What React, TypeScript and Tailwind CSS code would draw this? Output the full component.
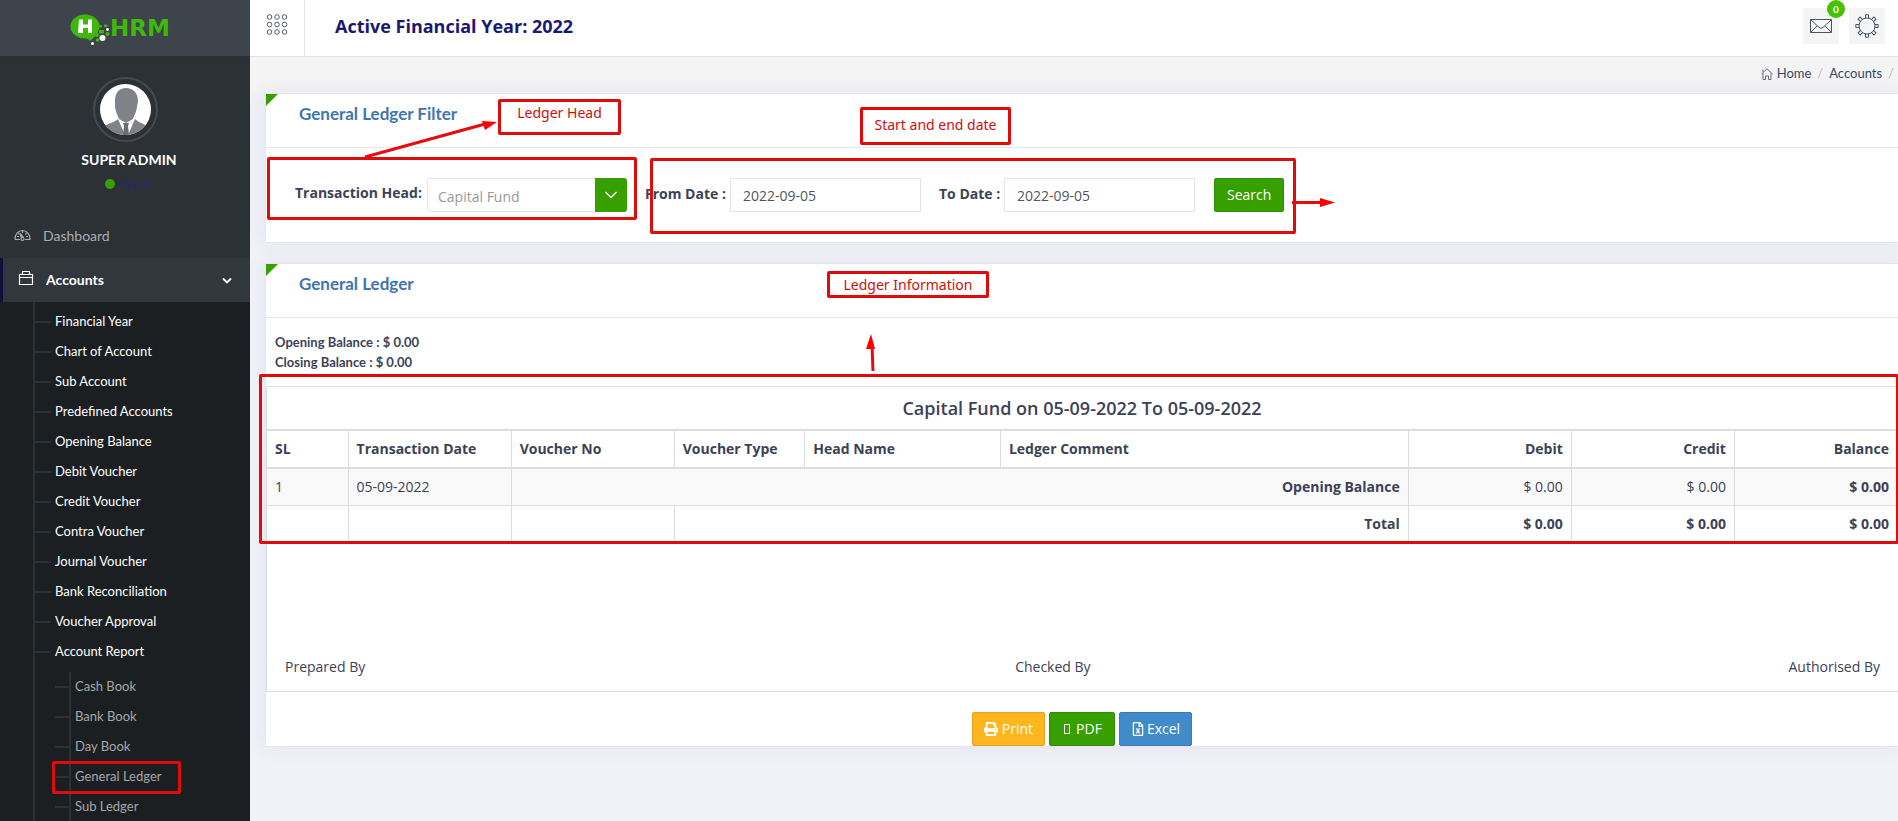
import React from "react";
import { FaPrint, FaRegFileExcel } from "react-icons/fa";

const accountLinks = [
  "Financial Year",
  "Chart of Account",
  "Sub Account",
  "Predefined Accounts",
  "Opening Balance",
  "Debit Voucher",
  "Credit Voucher",
  "Contra Voucher",
  "Journal Voucher",
  "Bank Reconciliation",
  "Voucher Approval",
  "Account Report",
];

const reportLinks = ["Cash Book", "Bank Book", "Day Book", "General Ledger", "Sub Ledger"];

function Logo() {
  return (
    <svg width="102" height="34" viewBox="0 0 102 34" role="img" aria-label="HRM">
      <ellipse cx="15" cy="13.500" rx="14.500" ry="12" fill="#3fb80b" />
      <path d="M11 24c5 1 8 2 9 4 3-3 7-5 8-10z" fill="#3fb80b" />
      <path d="M9 6.500h4v5h5v-5h4v13.500h-4v-5h-5v5H8z" fill="#fff" />
      <g fill="#3fb80b">
        <rect x="29" y="12" width="3" height="2.500" rx="1" />
        <rect x="34" y="11.500" width="3.500" height="2.500" rx="1" />
        <rect x="29" y="17" width="5" height="3.500" rx="1" />
        <circle cx="37.500" cy="21" r="2" />
        <circle cx="27.500" cy="27" r="1.800" />
        <circle cx="27" cy="22" r="2" />
      </g>
      <circle cx="32.500" cy="25" r="3" fill="#fff" />
      <circle cx="37.500" cy="16.500" r="1.400" fill="#fff" />
      <circle cx="22.500" cy="30.500" r="1.500" fill="#fff" />
      <text x="40" y="23" fill="#3fb80b" fontSize="23" fontWeight="700" fontFamily="DejaVu Sans, sans-serif">
        HRM
      </text>
    </svg>
  );
}

function Avatar() {
  return (
    <div className="flex size-[65px] items-center justify-center rounded-full border-2 border-[#444a50]">
      <svg width="51" height="51" viewBox="0 0 51 51" className="shrink-0" aria-hidden="true">
        <defs>
          <clipPath id="face">
            <circle cx="25.500" cy="25.500" r="25.500" />
          </clipPath>
        </defs>
        <g clipPath="url(#face)">
          <rect width="51" height="51" fill="#fff" />
          <path d="M15 17C15 9 19 4 26 4s12 5 12 13c0 2-1 4-1 6-1 6-3 9-4 12l-7 4-7-4c-1-3-3-6-4-12 0-2 0-4 0-6z" fill="#808287" />
          <path d="M0 44c6-4 14-5 18-9l7 16H0zM51 44c-6-4-12-5-16-9l-7 16h23z" fill="#808287" />
          <path d="M23 39h6l-1 3 1 9h-6l1-9z" fill="#6a6c71" />
        </g>
      </svg>
    </div>
  );
}

function Sidebar() {
  return (
    <aside className="flex w-[250px] shrink-0 flex-col bg-[#2c3136] font-[Lato,sans-serif]">
      <a href="#home" className="flex h-[57px] shrink-0 items-center justify-center border-b border-[#2a2e33] bg-[#3e444b] pt-1 pr-2">
        <Logo />
      </a>
      <div className="flex shrink-0 flex-col items-center pt-5">
        <Avatar />
        <p className="mt-2 pl-2 text-sm leading-5 font-bold text-white">SUPER ADMIN</p>
        <p className="mt-1 flex h-5 items-center gap-1 pl-2 text-xs text-[#232a6d]">
          <span className="size-2.5 rounded-full bg-[#37a000]" />
          Admin
        </p>
      </div>
      <nav className="mt-4 flex grow flex-col">
        <a href="#dashboard" className="flex h-12 shrink-0 items-center gap-3 pt-1 pl-3.5 text-sm text-[#a9adb0]">
          <svg width="17" height="14" viewBox="0 0 17 14" fill="none" stroke="currentColor" strokeWidth="1.200" aria-hidden="true">
            <path d="M1 10.500C1 5 4.500 1.500 8.500 1.500s7.500 3.500 7.500 9h-5M1 10.500h5M3 7.500h2M12 7.500h2M4.500 4l1 1.500M12.500 4l-1 1.500M8.500 2v2M7.500 9L6 4.500l3.500 4" />
            <circle cx="8.500" cy="10" r="1.500" />
          </svg>
          Dashboard
        </a>
        <a href="#accounts" className="flex h-11 shrink-0 items-center gap-3 border-l-3 border-[#100f3c] bg-[#32373d] pr-4 pl-[15px] text-sm font-bold text-white">
          <svg width="16" height="16" viewBox="0 0 16 16" fill="none" stroke="currentColor" className="-mt-1" aria-hidden="true">
            <path d="M1.500 4.500h13v10h-13zM1.500 7.500h13M4.500 4V1.500h7V4" strokeWidth="1.200" />
          </svg>
          <span className="grow">Accounts</span>
          <svg width="14" height="14" viewBox="0 0 14 14" fill="none" stroke="currentColor" strokeWidth="1.800" aria-hidden="true">
            <path d="M3 5.500l4 4 4-4" />
          </svg>
        </a>
        <div className="grow bg-[#1c1f22] pl-[33px]">
          <ul className="border-l-2 border-[#2c3136] pt-[5px]">
            {accountLinks.map((label) => (
              <li key={label}>
                <a href="#account" className="flex h-[30px] items-center gap-1 text-[13px] text-white">
                  <span className="h-0.5 w-4 bg-[#2c3136]" />
                  {label}
                </a>
              </li>
            ))}
            <li className="mt-[5px] pl-5">
              <ul>
                {reportLinks.map((label) => (
                  <li key={label}>
                    <a href="#report" className="flex h-[30px] items-center text-[13px] text-[#a4a7a9]">
                      <span className="h-0.5 w-3.5 bg-[#2c3136]" />
                      <span className="mr-1 h-full w-0.5 bg-[#2c3136]" />
                      {label}
                    </a>
                  </li>
                ))}
              </ul>
            </li>
          </ul>
        </div>
      </nav>
    </aside>
  );
}

const gearTeeth = [0, 45, 90, 135, 180, 225, 270, 315];

function TopBar() {
  return (
    <header className="flex h-[57px] items-center border-b border-[#e1e4ea] bg-white">
      <button type="button" aria-label="Toggle menu" className="flex h-full w-[55px] items-start justify-center border-r border-[#dfe3ec] pt-[14px]">
        <svg width="22" height="22" viewBox="0 0 22 22" fill="none" stroke="#555b66" aria-hidden="true">
          {[3, 10.5, 18].map((y) => [3.5, 11, 18.5].map((x) => <circle key={`${x}-${y}`} cx={x} cy={y} r="2.300" />))}
        </svg>
      </button>
      <h1 className="ml-[30px] grow pb-1 text-lg font-bold text-[#191970]">Active Financial Year: 2022</h1>
      <div className="mr-[13px] flex gap-2.5 pb-1">
        <button type="button" aria-label="Messages" className="relative flex size-9 items-center justify-center bg-[#f5f5f5]">
          <svg width="22" height="16" viewBox="0 0 22 16" fill="none" stroke="#4a5468" aria-hidden="true">
            <path d="M.5 1.500h21v13H.5zM.5 1.500L8 8.500l3 2 3-2 7.500-7M.5 14.500L7 8M21.500 14.500L15 8" />
          </svg>
          <span className="absolute -top-2 -right-1.5 flex size-[18px] items-center justify-center rounded-full bg-[#45c203] font-[Lato,sans-serif] text-[10px] font-bold text-white">
            0
          </span>
        </button>
        <button type="button" aria-label="Settings" className="flex size-9 items-center justify-center bg-[#f5f5f5]">
          <svg width="24" height="24" viewBox="0 0 24 24" fill="none" stroke="#4a5468" aria-hidden="true">
            <circle cx="12" cy="12" r="8" />
            {gearTeeth.map((angle) => (
              <path key={angle} d="M10.500 4V.8h3V4" transform={`rotate(${angle} 12 12)`} />
            ))}
          </svg>
        </button>
      </div>
    </header>
  );
}

function PanelHeading({ title }: { title: string }) {
  return (
    <div className="flex h-[54px] items-start border-b border-[#e4e8ee] pr-4">
      <svg width="12" height="12" viewBox="0 0 12 12" aria-hidden="true">
        <path d="M0 0h12L0 12z" fill="#37a000" />
      </svg>
      <h2 className="ml-[21px] pt-2 font-[Lato,sans-serif] text-[17px] leading-6 font-bold text-[#3f76ad]">{title}</h2>
    </div>
  );
}

function FilterPanel() {
  const field = "h-[34px] w-[191px] border border-[#e4e5e7] bg-white px-3 text-sm text-[#51555e]";
  return (
    <section className="h-[150px] border border-r-0 border-[#e4e8ee] bg-white shadow-[0_0_18px_rgba(90,90,180,0.10)]">
      <PanelHeading title="General Ledger Filter" />
      <form className="flex items-start pt-[30px] pl-[29px] text-sm" onSubmit={(event) => event.preventDefault()}>
        <label htmlFor="head" className="w-[132px] leading-[30px] font-bold">
          Transaction Head:
        </label>
        <div className="relative h-[34px] w-[200px]">
          <select id="head" className="h-full w-full appearance-none rounded-[3px] border border-[#e4e5e7] bg-white px-2.5 pt-1 text-sm text-[#999]">
            <option>Capital Fund</option>
          </select>
          <span className="pointer-events-none absolute top-0 right-0 flex h-full w-8 items-center justify-center rounded-r-[3px] bg-[#37a000]">
            <svg width="12" height="8" viewBox="0 0 12 8" fill="none" stroke="#fff" strokeWidth="1.300" aria-hidden="true">
              <path d="M.5 1L6 6.500 11.500 1" />
            </svg>
          </span>
        </div>
        <label htmlFor="from" className="ml-[18px] w-[85px] leading-8 font-bold">
          From Date :
        </label>
        <input id="from" defaultValue="2022-09-05" className={field} />
        <label htmlFor="to" className="ml-[18px] w-[65px] leading-8 font-bold">
          To Date :
        </label>
        <input id="to" defaultValue="2022-09-05" className={field} />
        <button type="submit" className="ml-[19px] h-[34px] rounded-xs border border-[#318d01] bg-[#37a000] px-3 text-white">
          Search
        </button>
      </form>
    </section>
  );
}

function LedgerTable() {
  const cell = "border border-[#ddd] px-2";
  const money = "border border-[#ddd] px-2 text-right";
  return (
    <table className="w-full table-fixed border-collapse text-left text-sm">
      <colgroup>
        <col className="w-[5%]" />
        <col className="w-[10%]" />
        <col className="w-[10%]" />
        <col className="w-[8%]" />
        <col className="w-[12%]" />
        <col />
        <col className="w-[10%]" />
        <col className="w-[10%]" />
        <col className="w-[10%]" />
      </colgroup>
      <thead>
        <tr className="h-[43px] border-b-2 border-[#ddd]">
          <th colSpan={9} className="border-x border-t border-[#ddd] text-center text-lg font-semibold">
            Capital Fund on 05-09-2022 To 05-09-2022
          </th>
        </tr>
        <tr className="h-[38px] border-b-2 border-[#ddd]">
          {["SL", "Transaction Date", "Voucher No", "Voucher Type", "Head Name", "Ledger Comment"].map((name) => (
            <th key={name} className="border-x border-[#ddd] px-2 font-bold">
              {name}
            </th>
          ))}
          {["Debit", "Credit", "Balance"].map((name) => (
            <th key={name} className="border-x border-[#ddd] px-2 text-right font-bold">
              {name}
            </th>
          ))}
        </tr>
      </thead>
      <tbody>
        <tr className="h-[38px] bg-[#f9f9f9]">
          <td className={cell}>1</td>
          <td className={cell}>05-09-2022</td>
          <td colSpan={4} className="border border-[#ddd] px-2 text-right font-bold">Opening Balance</td>
          <td className={money}>$ 0.00</td>
          <td className={money}>$ 0.00</td>
          <td className="border border-[#ddd] px-2 text-right font-bold">$ 0.00</td>
        </tr>
        <tr className="h-[37px] font-bold">
          <td className={cell} />
          <td className={cell} />
          <td className={cell} />
          <td colSpan={3} className={money}>Total</td>
          <td className={money}>$ 0.00</td>
          <td className={money}>$ 0.00</td>
          <td className={money}>$ 0.00</td>
        </tr>
      </tbody>
    </table>
  );
}

function LedgerPanel() {
  return (
    <section className="mt-5 border border-r-0 border-[#e4e8ee] bg-white shadow-[0_0_18px_rgba(90,90,180,0.10)]">
      <PanelHeading title="General Ledger" />
      <div className="px-[9px] pt-3.5 pb-3.5 font-[Lato,sans-serif] text-[13px] leading-5 font-bold">
        <p>Opening Balance : $ 0.00</p>
        <p>Closing Balance : $ 0.00</p>
      </div>
      <LedgerTable />
      <div className="flex justify-between border-b border-l border-[#ddd] px-[18px] pt-[114px] pb-[14px] text-sm leading-5">
        <span>Prepared By</span>
        <span className="pr-12">Checked By</span>
        <span>Authorised By</span>
      </div>
      <div className="flex justify-center gap-1 pt-5 text-sm text-white">
        <button type="button" className="flex h-[34px] items-center gap-1 rounded-xs border border-[#e2a128] bg-[#ffb61e] px-[11px]">
          <FaPrint size={14} /> Print
        </button>
        <button type="button" className="flex h-[34px] items-center gap-1 rounded-xs border border-[#318d01] bg-[#37a000] px-3">
          <span className="mx-0.5 h-2.5 w-1.5 border border-white" /> PDF
        </button>
        <button type="button" className="flex h-[34px] items-center gap-0.5 rounded-xs border border-[#3b7cb4] bg-[#428bca] px-[11px]">
          <FaRegFileExcel size={14} /> Excel
        </button>
      </div>
    </section>
  );
}

function Annotations() {
  const box = "absolute rounded-[2px] border-3 border-[#e00b0b]";
  const note = "absolute flex items-center justify-center rounded-[2px] border-3 border-[#e00b0b] font-['Noto_Sans',sans-serif] text-sm text-[#d00d0d]";
  return (
    <div className="pointer-events-none absolute inset-0 overflow-hidden">
      <div className={`${box} top-[761px] left-[52px] h-[33px] w-[129px]`} />
      <div className={`${box} top-[157px] left-[267px] h-[63px] w-[370px]`} />
      <div className={`${box} top-[158px] left-[650px] h-[76px] w-[646px]`} />
      <div className={`${box} top-[374px] left-[259px] h-[170px] w-[1640px]`} />
      <div className={`${note} top-[99px] left-[498px] h-9 w-[123px] pb-2`}>Ledger Head</div>
      <div className={`${note} top-[107px] left-[860px] h-[38px] w-[151px] pb-0.5`}>Start and end date</div>
      <div className={`${note} top-[271px] left-[827px] h-[27px] w-[162px]`}>Ledger Information</div>
      <svg className="absolute top-0 left-0" width="1400" height="400" viewBox="0 0 1400 400" aria-hidden="true">
        <g stroke="#e80b0b" strokeWidth="3" fill="none">
          <path d="M365 157L485 124M1292 202.500h30M873 371l-1-26" />
        </g>
        <g fill="#f00">
          <path d="M497 122l-15-1 3 9z" />
          <path d="M1335 202.500l-15-4.500v9z" />
          <path d="M871 334l-5 15h9z" />
        </g>
      </svg>
    </div>
  );
}

export default function App() {
  return (
    <div className="relative flex h-screen overflow-hidden bg-[#f1f2f7] font-['Open_Sans',sans-serif] text-[#3c4257]">
      <Sidebar />
      <main className="min-w-0 grow">
        <TopBar />
        <nav aria-label="Breadcrumb" className="flex h-9 items-center justify-end gap-1.5 bg-[#f4f4f5] pr-1 pb-0.5 font-[Lato,sans-serif] text-[13px] text-[#374767]">
          <a href="#home" className="flex items-center gap-1">
            <svg width="12" height="12" viewBox="0 0 12 12" fill="none" stroke="#666c78" aria-hidden="true">
              <path d="M.5 6L6 .8 11.500 6M2 5v6.500h2.500V8h3v3.500H10V5M2 4V1.500" />
            </svg>
            Home
          </a>
          <span className="text-[#bbb]">/</span>
          <a href="#accounts">Accounts</a>
          <span className="text-[#bbb]">/</span>
        </nav>
        <div className="pl-[15px]">
          <FilterPanel />
          <LedgerPanel />
        </div>
      </main>
      <Annotations />
    </div>
  );
}
